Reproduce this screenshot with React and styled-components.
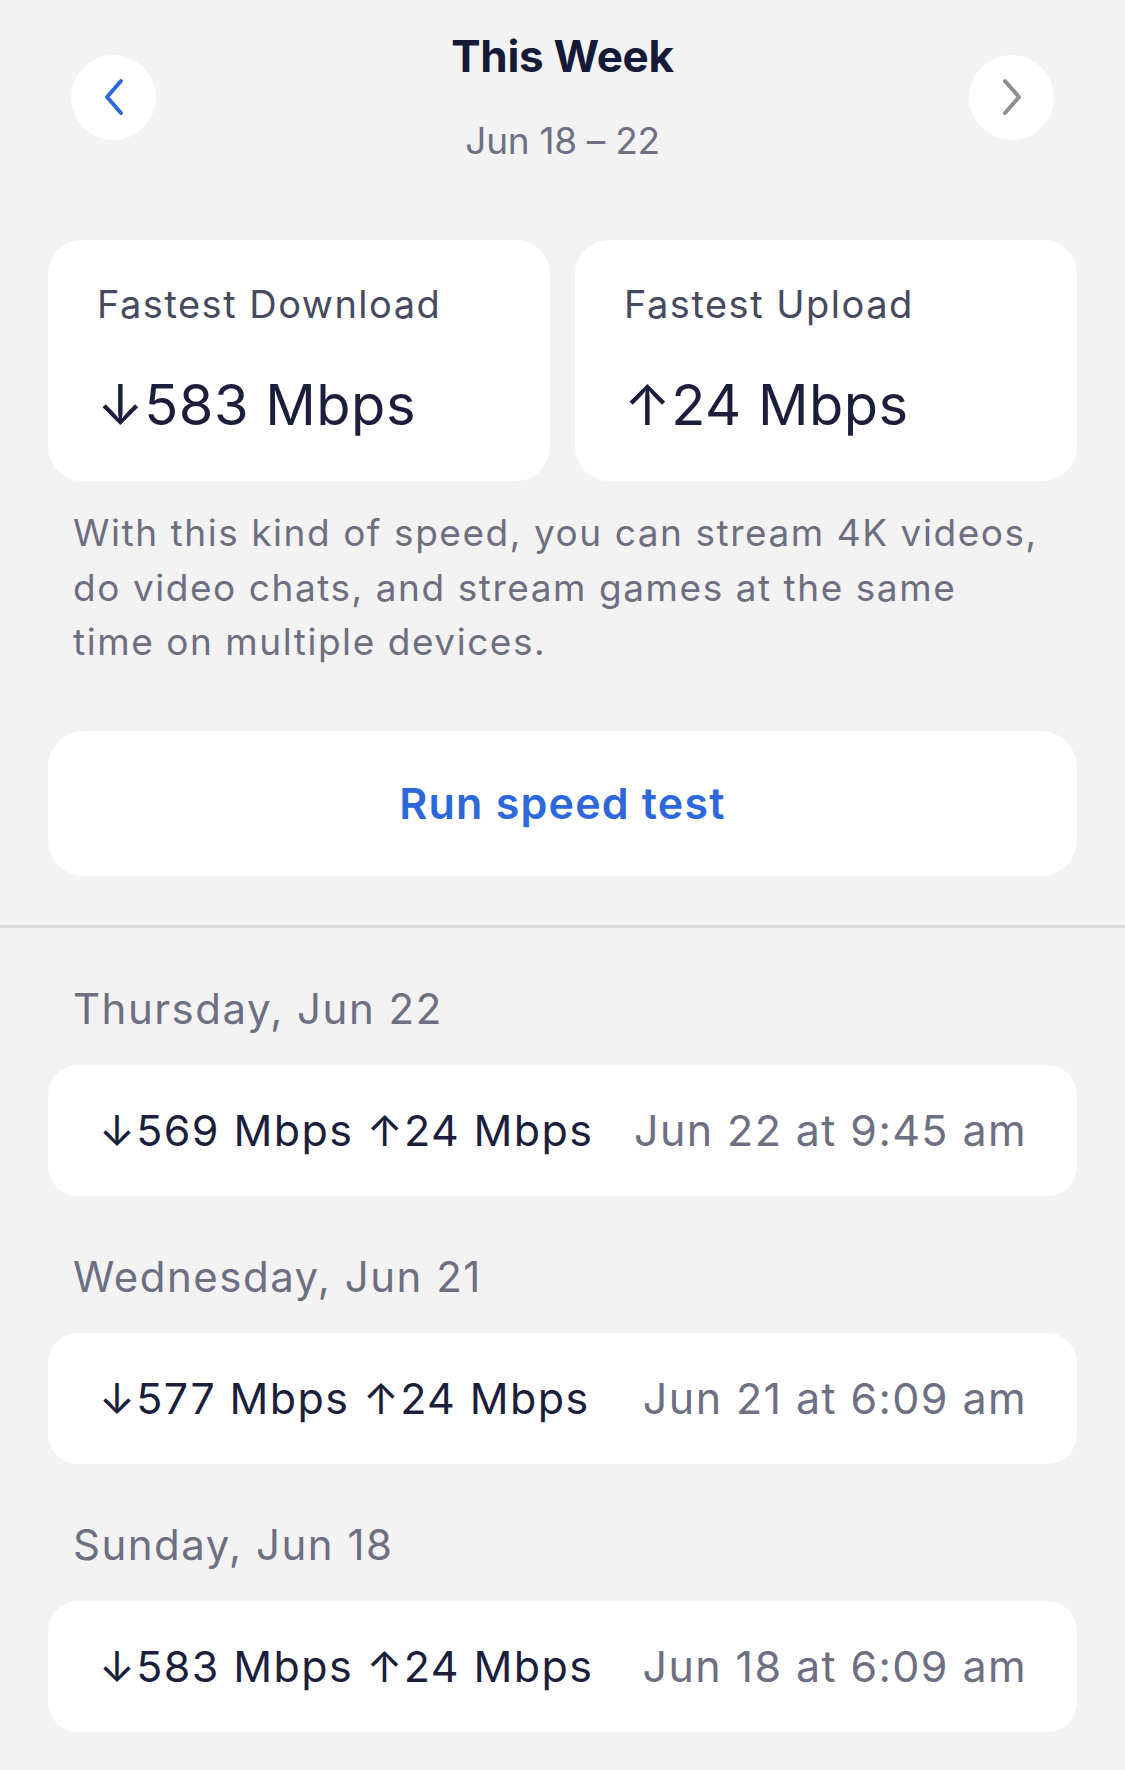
import React from "react";
import styled, { createGlobalStyle } from "styled-components";

const Global = createGlobalStyle`
  html, body { margin: 0; padding: 0; background: #f3f3f4; }
  body { font-family: Inter, "Noto Sans", "Liberation Sans", sans-serif; -webkit-font-smoothing: antialiased; }
  * { box-sizing: border-box; }
`;

const Page = styled.div`
  width: 1125px;
  min-height: 1770px;
  background: #f3f3f4;
  display: flex;
  flex-direction: column;
  padding-bottom: 40px;
`;

const Header = styled.header`
  display: grid;
  grid-template-columns: 85px 1fr 85px;
  align-items: center;
  padding: 28px 71px 0;
`;

const CircleButton = styled.button`
  width: 85px;
  height: 85px;
  border-radius: 50%;
  border: none;
  background: #ffffff;
  display: flex;
  align-items: center;
  justify-content: center;
  padding: 0;
  color: ${(p) => p.$color};
`;

const HeaderText = styled.div`
  display: flex;
  flex-direction: column;
  align-items: center;
  gap: 32px;
`;

const Title = styled.h1`
  margin: 0;
  font-size: 44px;
  line-height: 56px;
  font-weight: 700;
  color: #151a38;
  letter-spacing: -0.3px;
`;

const Subtitle = styled.div`
  font-size: 37px;
  line-height: 50px;
  color: #6f7183;
  letter-spacing: -0.3px;
`;

const Section = styled.section`
  padding: 0 48px;
  display: flex;
  flex-direction: column;
`;

const StatGrid = styled.div`
  margin-top: 74px;
  display: grid;
  grid-template-columns: 1fr 1fr;
  gap: 25px;
`;

const StatCard = styled.div`
  background: #ffffff;
  border-radius: 34px;
  padding: 40px 49px 40px;
  display: flex;
  flex-direction: column;
  gap: 44px;
  height: 241px;
`;

const StatLabel = styled.div`
  font-size: 38px;
  line-height: 48px;
  color: #464a5f;
  letter-spacing: 1.5px;
`;

const StatValue = styled.div`
  font-size: 56px;
  line-height: 66px;
  color: #1b1f3c;
  letter-spacing: 0.5px;
`;

const Blurb = styled.p`
  margin: 25px 0 0;
  padding: 0 35px 0 25px;
  font-size: 37px;
  line-height: 54.5px;
  color: #6d6f80;
  letter-spacing: 1.55px;
`;

const RunButton = styled.button`
  margin-top: 61px;
  height: 145px;
  border: none;
  border-radius: 36px;
  background: #ffffff;
  font-family: inherit;
  font-size: 43px;
  font-weight: 600;
  color: #2c68dc;
  letter-spacing: 1.2px;
`;

const Divider = styled.hr`
  margin: 49px 0 0;
  border: none;
  height: 3px;
  background: #dcdcdd;
`;

const History = styled(Section)`
  padding-top: 56px;
  gap: 56px;
`;

const DayGroup = styled.div`
  display: flex;
  flex-direction: column;
  gap: 31px;
`;

const DayLabel = styled.div`
  padding-left: 25px;
  font-size: 42px;
  line-height: 50px;
  color: #6d6f82;
  letter-spacing: 1.5px;
`;

const ResultRow = styled.div`
  height: 131px;
  background: #ffffff;
  border-radius: 30px;
  padding: 0 50px 0 51px;
  display: flex;
  align-items: center;
  justify-content: space-between;
  font-size: 43px;
`;

const Speeds = styled.span`
  color: #1b1f3c;
  letter-spacing: 1.4px;
`;

const When = styled.span`
  color: #6d6f82;
  letter-spacing: 1.4px;
`;

const Chevron = ({ dir }) => (
  <svg width="22" height="38" viewBox="0 0 22 38" fill="none">
    <polyline
      points={dir === "left" ? "18,3 4,19 18,35" : "4,3 18,19 4,35"}
      stroke="currentColor"
      strokeWidth="4"
      strokeLinecap="round"
      strokeLinejoin="round"
    />
  </svg>
);

const history = [
  { day: "Thursday, Jun 22", down: 569, up: 24, when: "Jun 22 at 9:45 am" },
  { day: "Wednesday, Jun 21", down: 577, up: 24, when: "Jun 21 at 6:09 am" },
  { day: "Sunday, Jun 18", down: 583, up: 24, when: "Jun 18 at 6:09 am" },
];

export default function App() {
  return (
    <Page>
      <Global />
      <Header>
        <CircleButton $color="#2c68dc" aria-label="Previous week">
          <Chevron dir="left" />
        </CircleButton>
        <HeaderText>
          <Title>This Week</Title>
          <Subtitle>Jun 18 – 22</Subtitle>
        </HeaderText>
        <CircleButton $color="#8e8e93" aria-label="Next week">
          <Chevron dir="right" />
        </CircleButton>
      </Header>

      <Section>
        <StatGrid>
          <StatCard>
            <StatLabel>Fastest Download</StatLabel>
            <StatValue>↓583 Mbps</StatValue>
          </StatCard>
          <StatCard>
            <StatLabel>Fastest Upload</StatLabel>
            <StatValue>↑24 Mbps</StatValue>
          </StatCard>
        </StatGrid>
        <Blurb>
          With this kind of speed, you can stream 4K videos, do video chats, and stream games at the same time on multiple devices.
        </Blurb>
        <RunButton>Run speed test</RunButton>
      </Section>

      <Divider />

      <History>
        {history.map((h) => (
          <DayGroup key={h.day}>
            <DayLabel>{h.day}</DayLabel>
            <ResultRow>
              <Speeds>↓{h.down} Mbps ↑{h.up} Mbps</Speeds>
              <When>{h.when}</When>
            </ResultRow>
          </DayGroup>
        ))}
      </History>
    </Page>
  );
}
